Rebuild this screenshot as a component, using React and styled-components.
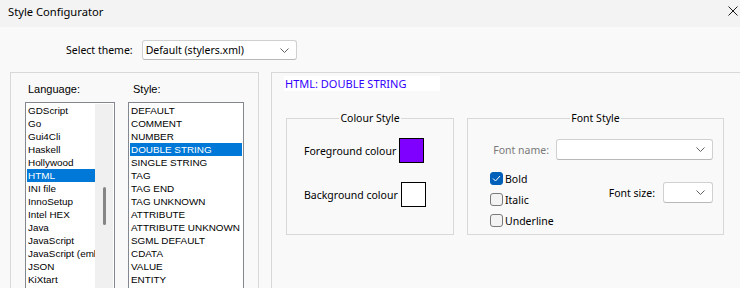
import React from 'react';
import styled, { createGlobalStyle } from 'styled-components';

const Global = createGlobalStyle`
  html, body { margin: 0; padding: 0; }
  body {
    width: 740px; height: 288px; overflow: hidden;
    background: #f9f9f9;
    font-family: "Noto Sans", "Liberation Sans", sans-serif;
    font-size: 10.5px; color: #000;
  }
  * { box-sizing: border-box; }
`;

const Window = styled.div`
  width: 740px; height: 288px; overflow: hidden;
  display: flex; flex-direction: column;
`;

const TitleBar = styled.div`
  height: 27px; flex: none; background: #f3f3f3;
  display: flex; align-items: flex-start; justify-content: space-between;
  padding: 4px 2px 0 8px;
  font-size: 11.2px; line-height: 15px;
`;

const CloseBtn = styled.div`
  width: 10px; height: 10px; margin-top: 2px;
  display: flex;
`;

const ThemeRow = styled.div`
  margin-top: 13px; height: 20px; flex: none;
  display: flex; align-items: center; gap: 9px;
  padding-left: 66px;
`;

const Label = styled.span`
  color: ${p => (p.$disabled ? '#7a7a7a' : '#000')};
  white-space: nowrap;
`;

const Combo = styled.div`
  width: ${p => p.$w}px; height: ${p => p.$h || 20}px;
  background: #fff; border: 1px solid #d0d0d0; border-bottom-color: #b8b8b8;
  border-radius: 3px;
  display: flex; align-items: center; justify-content: space-between;
  padding: 0 7px 0 3px;
`;

const Panels = styled.div`
  margin-top: 12px; flex: 1;
  display: flex; gap: 12px; padding-left: 10px;
`;

const LeftBox = styled.div`
  width: 249px; flex: none;
  border: 1px solid #d8d8d8; border-bottom: none;
  padding: 10px 0 0 14px;
  display: flex; gap: 13px;
`;

const Column = styled.div`
  display: flex; flex-direction: column; gap: 7px;
`;

const ListLabel = styled.div`
  font-family: "Liberation Sans", Arial, sans-serif;
  font-size: 11px; line-height: 12px; height: 12px;
  padding-left: ${p => p.$indent}px;
`;

const ListBox = styled.div`
  width: ${p => p.$w}px; height: 200px;
  background: #fff; border: 1px solid #828790;
  padding: 1px; display: flex;
`;

const Items = styled.div`
  flex: 1; min-width: 0; display: flex; flex-direction: column;
  overflow: hidden;
`;

const Item = styled.div`
  height: 13px; line-height: 13px; padding-left: 1px; flex: none;
  font-family: "Liberation Sans", Arial, sans-serif; font-size: 9.9px;
  white-space: nowrap; overflow: hidden;
  background: ${p => (p.$selected ? '#0078d7' : 'transparent')};
  color: ${p => (p.$selected ? '#fff' : '#000')};
`;

const ScrollBar = styled.div`
  width: 18px; flex: none; background: #f0f0f0;
  display: flex; flex-direction: column; align-items: center;
`;

const Thumb = styled.div`
  width: 3px; height: 38px; margin-top: 83px;
  background: #858585; border-radius: 2px;
`;

const RightBox = styled.div`
  width: 480px; flex: none;
  border: 1px solid #d8d8d8; border-bottom: none; border-right: none;
  padding: 3px 0 0 12px;
  display: flex; flex-direction: column;
`;

const Header = styled.div`
  width: 156px; height: 15px; background: #fff;
  color: #3300ff; line-height: 15px; padding-left: 1px;
  font-size: 11px; white-space: nowrap;
`;

const Groups = styled.div`
  margin-top: 19px; margin-left: 2px;
  display: flex; gap: 13px; align-items: flex-start;
`;

const Group = styled.fieldset`
  margin: 0; width: ${p => p.$w}px; height: 125px;
  border: 1px solid #d8d8d8;
  padding: 0;
  display: flex; flex-direction: column;
`;

const Legend = styled.legend`
  margin: 0 auto; padding: 0 1px; line-height: 16px;
`;

const ColourRow = styled.div`
  display: flex; align-items: center; gap: 3px;
  padding-left: 17px; margin-top: ${p => p.$mt}px;
`;

const Swatch = styled.div`
  width: 25px; height: 25px; background: ${p => p.$color};
  border: 1px solid #000;
`;

const FontBody = styled.div`
  display: flex; flex-direction: column;
  padding: 13px 10px 0 22px;
`;

const NameRow = styled.div`
  display: flex; align-items: center; justify-content: flex-end; gap: 7px;
`;

const OptionsRow = styled.div`
  margin-top: 12px;
  display: flex; justify-content: space-between; align-items: flex-start;
`;

const Checks = styled.div`
  display: flex; flex-direction: column; gap: 8px;
`;

const CheckRow = styled.label`
  display: flex; align-items: center; gap: 2px; height: 13px;
`;

const Box = styled.span`
  width: 13px; height: 13px; border-radius: 3px;
  border: 1px solid ${p => (p.$checked ? '#005fb8' : '#7a7a7a')};
  background: ${p => (p.$checked ? '#005fb8' : '#f3f3f3')};
  display: flex; align-items: center; justify-content: center;
`;

const SizeRow = styled.div`
  margin-top: 10px;
  display: flex; align-items: center; gap: 8px;
`;

const Chevron = () => (
  <svg width="9" height="5" viewBox="0 0 9 5">
    <path d="M0.5 0.5 L4.5 4.5 L8.5 0.5" fill="none" stroke="#606060" strokeWidth="1" />
  </svg>
);

const Check = ({ checked, label }) => (
  <CheckRow>
    <Box $checked={checked}>
      {checked && (
        <svg width="9" height="7" viewBox="0 0 9 7">
          <path d="M1 3.5 L3.5 6 L8 1" fill="none" stroke="#fff" strokeWidth="1" />
        </svg>
      )}
    </Box>
    <Label>{label}</Label>
  </CheckRow>
);

const languages = ['GDScript', 'Go', 'Gui4Cli', 'Haskell', 'Hollywood', 'HTML', 'INI file', 'InnoSetup', 'Intel HEX', 'Java', 'JavaScript', 'JavaScript (embedded)', 'JSON', 'KiXtart', 'LaTeX'];
const styles = ['DEFAULT', 'COMMENT', 'NUMBER', 'DOUBLE STRING', 'SINGLE STRING', 'TAG', 'TAG END', 'TAG UNKNOWN', 'ATTRIBUTE', 'ATTRIBUTE UNKNOWN', 'SGML DEFAULT', 'CDATA', 'VALUE', 'ENTITY', 'SCRIPT'];

export default function App() {
  return (
    <Window>
      <Global />
      <TitleBar>
        <span>Style Configurator</span>
        <CloseBtn>
          <svg width="10" height="10" viewBox="0 0 10 10">
            <path d="M0.5 0.5 L9.5 9.5 M9.5 0.5 L0.5 9.5" stroke="#1a1a1a" strokeWidth="1" />
          </svg>
        </CloseBtn>
      </TitleBar>
      <ThemeRow>
        <Label>Select theme:</Label>
        <Combo $w={155}>
          <span>Default (stylers.xml)</span>
          <Chevron />
        </Combo>
      </ThemeRow>
      <Panels>
        <LeftBox>
          <Column>
            <ListLabel $indent={3}>Language:</ListLabel>
            <ListBox $w={90}>
              <Items>
                {languages.map(l => (
                  <Item key={l} $selected={l === 'HTML'}>{l}</Item>
                ))}
              </Items>
              <ScrollBar><Thumb /></ScrollBar>
            </ListBox>
          </Column>
          <Column>
            <ListLabel $indent={5}>Style:</ListLabel>
            <ListBox $w={116}>
              <Items>
                {styles.map(s => (
                  <Item key={s} $selected={s === 'DOUBLE STRING'}>{s}</Item>
                ))}
              </Items>
            </ListBox>
          </Column>
        </LeftBox>
        <RightBox>
          <Header>HTML: DOUBLE STRING</Header>
          <Groups>
            <Group $w={168}>
              <Legend>Colour Style</Legend>
              <ColourRow $mt={12}>
                <Label>Foreground colour</Label>
                <Swatch $color="#8000ff" />
              </ColourRow>
              <ColourRow $mt={19}>
                <Label>Background colour</Label>
                <Swatch $color="#ffffff" />
              </ColourRow>
            </Group>
            <Group $w={257}>
              <Legend>Font Style</Legend>
              <FontBody>
                <NameRow>
                  <Label $disabled>Font name:</Label>
                  <Combo $w={157} $h={21}>
                    <span />
                    <Chevron />
                  </Combo>
                </NameRow>
                <OptionsRow>
                  <Checks>
                    <Check checked label="Bold" />
                    <Check label="Italic" />
                    <Check label="Underline" />
                  </Checks>
                  <SizeRow>
                    <Label>Font size:</Label>
                    <Combo $w={50} $h={21}>
                      <span />
                      <Chevron />
                    </Combo>
                  </SizeRow>
                </OptionsRow>
              </FontBody>
            </Group>
          </Groups>
        </RightBox>
      </Panels>
    </Window>
  );
}
